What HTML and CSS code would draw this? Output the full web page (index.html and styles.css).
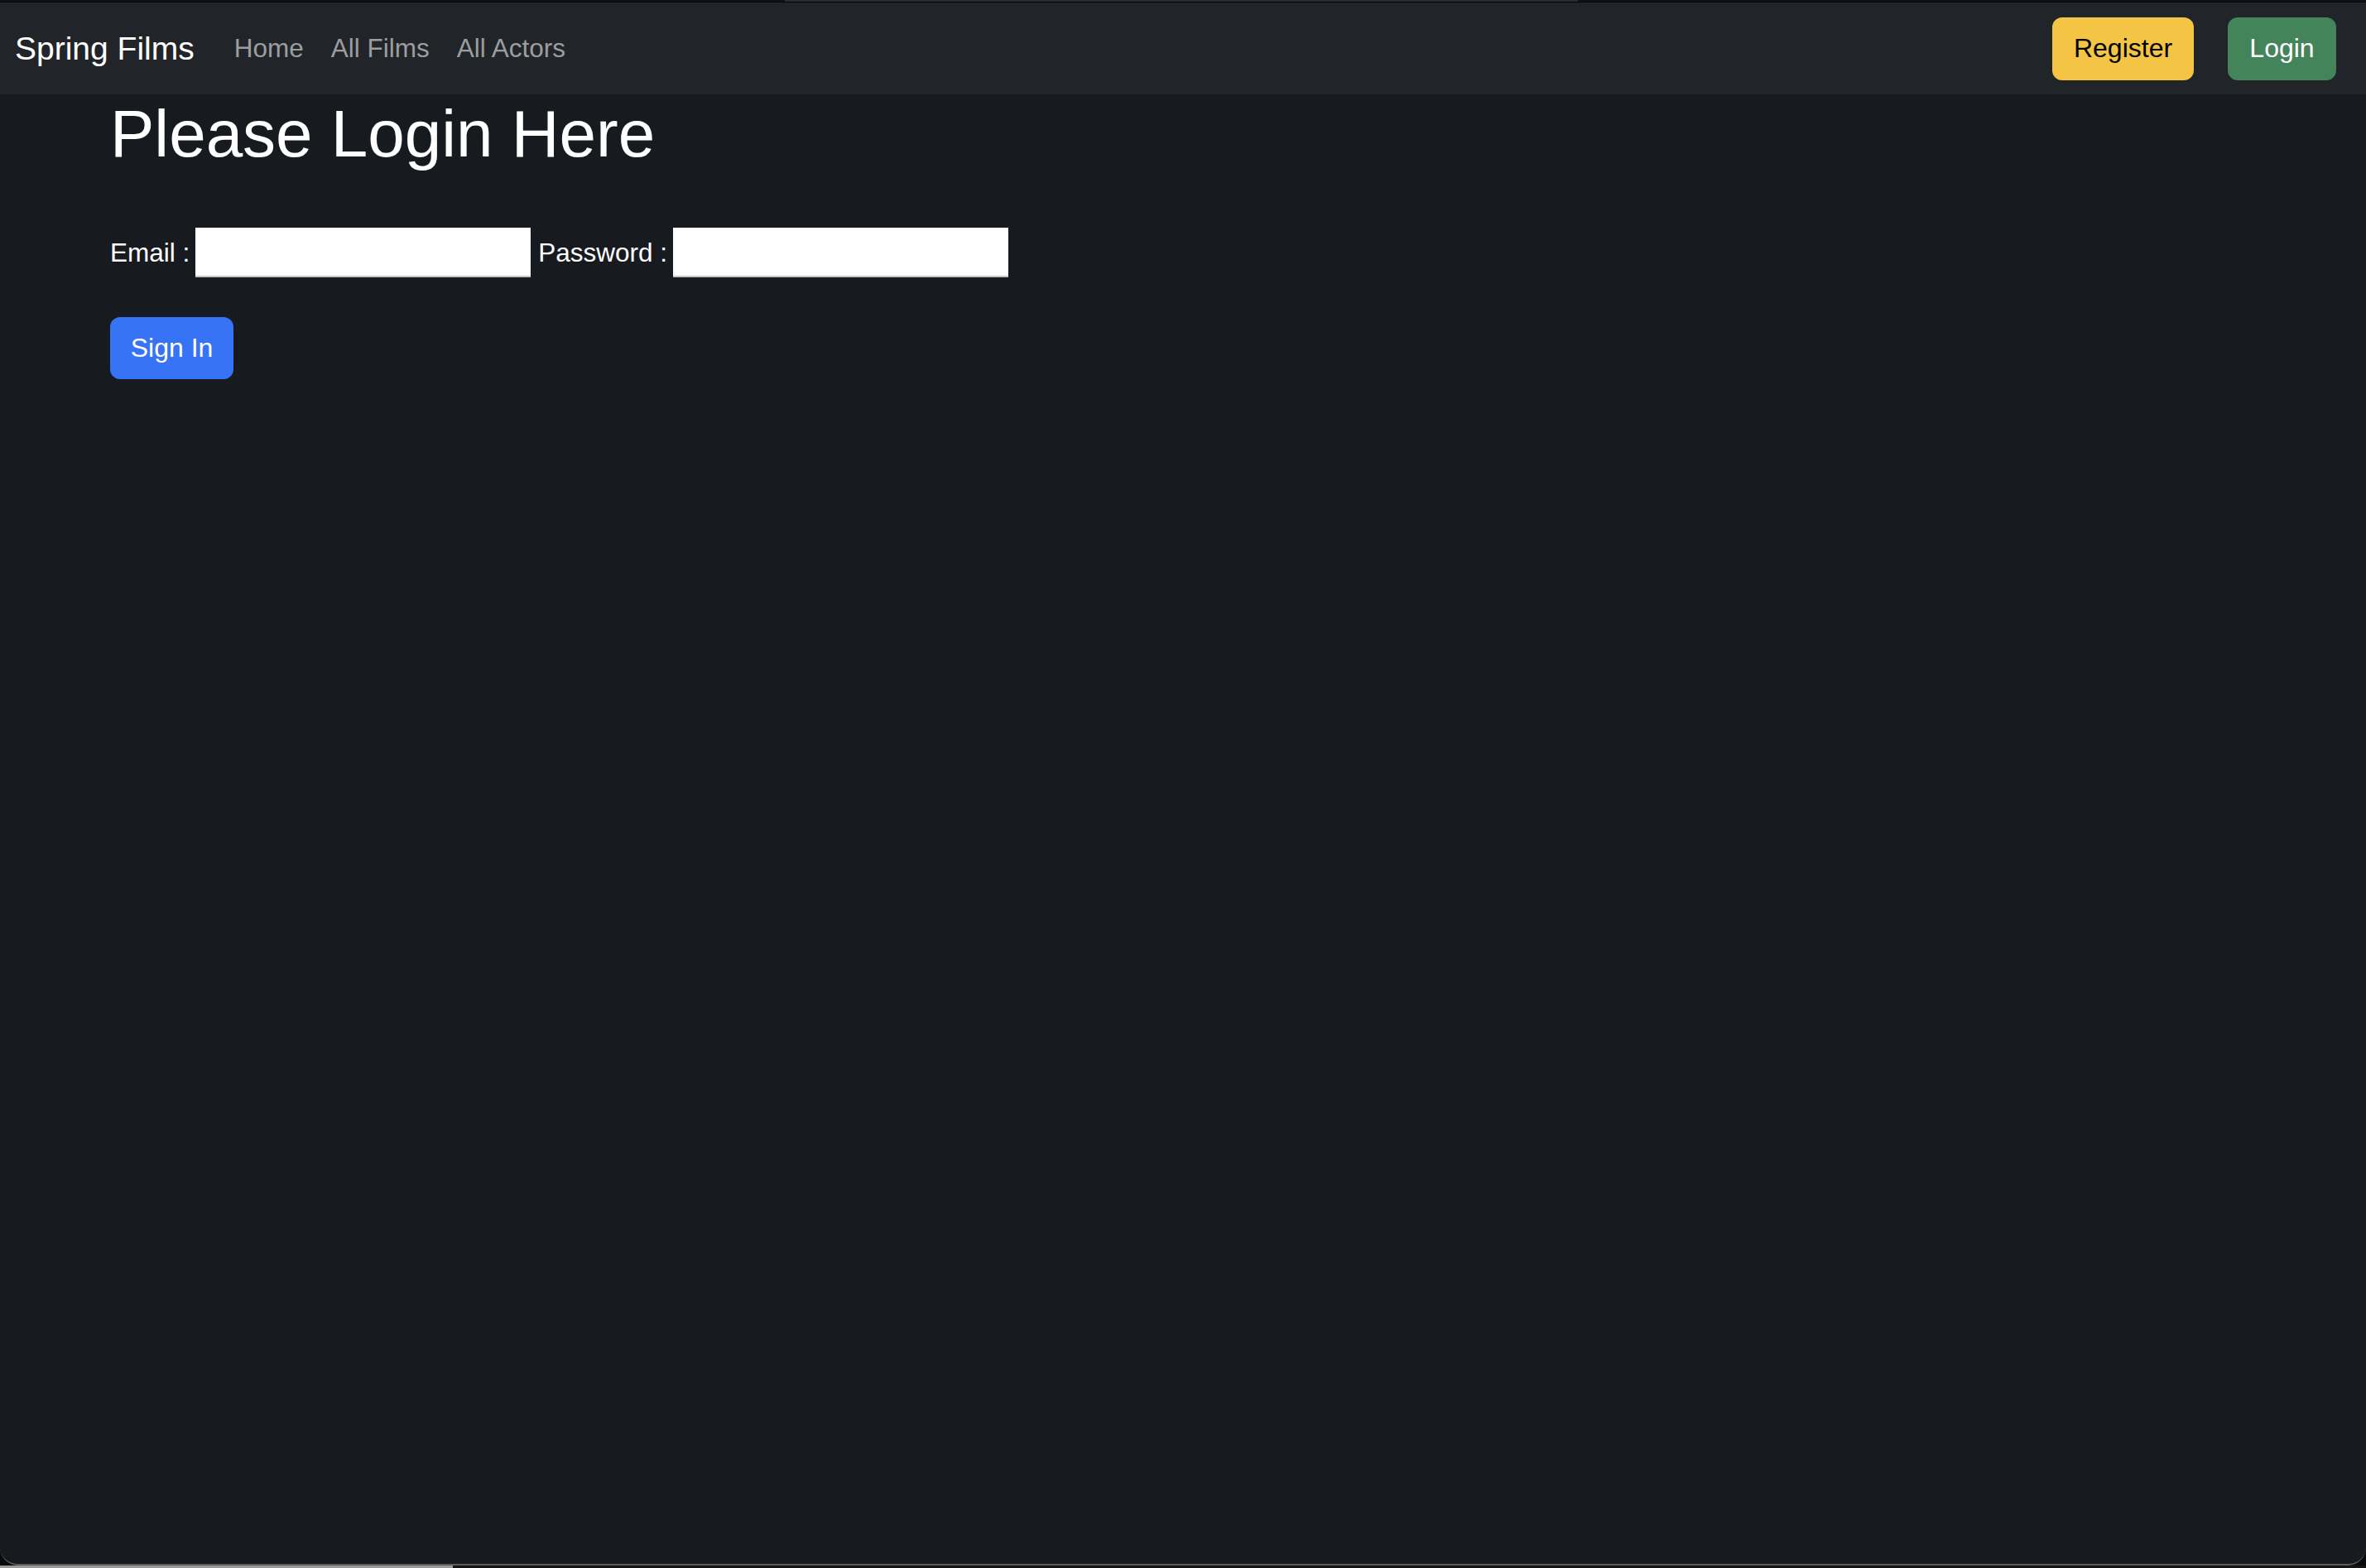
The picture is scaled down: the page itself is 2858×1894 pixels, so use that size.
FILE: index.html
```html
<!DOCTYPE html>
<html lang="en">
<head>
<meta charset="utf-8">
<title>Spring Films - Login</title>
<link rel="stylesheet" href="styles.css">
</head>
<body>
<div class="topline"><span class="topline-mid"></span></div>
<div class="window">
  <nav class="navbar">
    <a class="brand" href="#">Spring Films</a>
    <ul class="nav-links">
      <li><a href="#">Home</a></li>
      <li><a href="#">All Films</a></li>
      <li><a href="#">All Actors</a></li>
    </ul>
    <div class="nav-actions">
      <a class="btn btn-warning" href="#">Register</a>
      <a class="btn btn-success" href="#">Login</a>
    </div>
  </nav>
  <main class="container">
    <h1 class="title">Please Login Here</h1>
    <form class="login-form">
      <div class="form-row">
        <label for="email">Email :</label>
        <input id="email" type="text">
        <label for="password">Password :</label>
        <input id="password" type="password">
      </div>
      <button type="button" class="btn btn-primary">Sign In</button>
    </form>
  </main>
</div>
<div class="bottomline"><span class="bottomline-left"></span></div>
</body>
</html>
```
FILE: styles.css
```css
* { box-sizing: border-box; }

html, body {
  margin: 0;
  padding: 0;
  height: 100%;
}

body {
  background: #0b0b0c;
  font-family: "Liberation Sans", Arial, Helvetica, sans-serif;
  color: #ffffff;
  display: flex;
  flex-direction: column;
  overflow: hidden;
}

.topline {
  height: 3px;
  background: #111213;
  border-bottom: 1px solid #050505;
  position: relative;
  flex: none;
}
.topline-mid {
  position: absolute;
  left: 948px;
  width: 958px;
  top: 0;
  height: 2px;
  background: #2b2c2e;
}

.window {
  flex: 1;
  background: #171a1f;
  border-radius: 0 0 22px 22px;
  border-bottom: 2px solid #5b5d61;
  display: flex;
  flex-direction: column;
  overflow: hidden;
}

.bottomline {
  height: 3px;
  flex: none;
  background: #151515;
  position: relative;
}
.bottomline-left {
  position: absolute;
  left: 0;
  top: 0;
  width: 547px;
  height: 3px;
  background: #9a9a9a;
}

/* Navbar */
.navbar {
  height: 111px;
  background: #212529;
  display: flex;
  align-items: center;
  padding: 0 36px 0 18px;
  flex: none;
}

.brand {
  color: #ffffff;
  font-size: 39px;
  text-decoration: none;
  margin-right: 48px;
  line-height: 1;
}

.nav-links {
  list-style: none;
  margin: 0;
  padding: 0;
  display: flex;
  gap: 33px;
}
.nav-links a {
  color: #9c9d9f;
  font-size: 31.5px;
  text-decoration: none;
}

.nav-actions {
  margin-left: auto;
  display: flex;
  gap: 41px;
}

.btn {
  display: inline-flex;
  align-items: center;
  justify-content: center;
  height: 76px;
  padding: 0 24px;
  font-family: "Liberation Sans", Arial, Helvetica, sans-serif;
  font-size: 32px;
  border: none;
  border-radius: 12px;
  text-decoration: none;
  cursor: pointer;
}
.btn-warning {
  background: #f4c445;
  color: #000000;
  width: 171px;
}
.btn-success {
  background: #43845a;
  color: #ffffff;
  width: 131px;
}
.btn-primary {
  background: #3673f5;
  color: #ffffff;
  width: 149px;
  height: 75px;
}

/* Content */
.container {
  padding: 0 0 0 133px;
}

.title {
  font-size: 80px;
  font-weight: 400;
  line-height: 96px;
  margin: 0 0 16px 0;
  color: #ffffff;
}

.login-form {
  display: flex;
  flex-direction: column;
  align-items: flex-start;
}

.form-row {
  display: flex;
  align-items: center;
  margin-top: 49px;
  margin-bottom: 48px;
  font-size: 31.5px;
}
.form-row label {
  margin-right: 7px;
}
.form-row input {
  width: 405px;
  height: 60px;
  background: #ffffff;
  border: none;
  border-bottom: 2px solid #c4c4c6;
  margin: 0 9px 0 0;
  padding: 0 4px;
  font-size: 28px;
  outline: none;
}
```
